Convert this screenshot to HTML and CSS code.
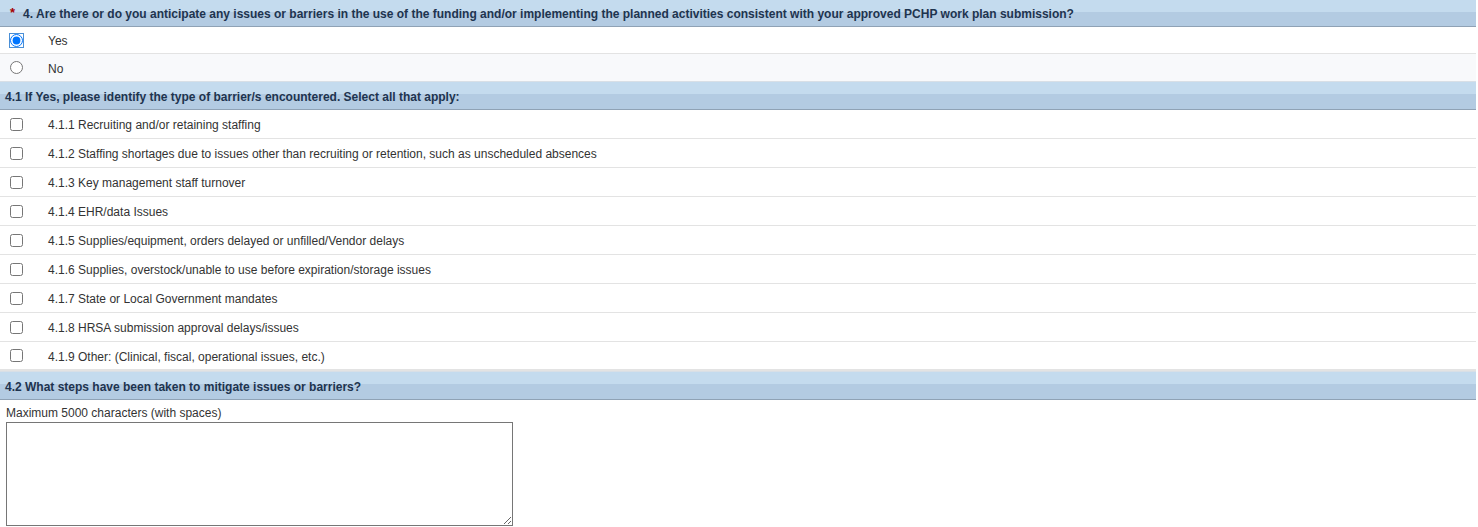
FILE: index.html
```html
<!DOCTYPE html>
<html lang="en">
<head>
  <meta charset="UTF-8">
  <title>Barriers</title>
  <link rel="stylesheet" href="styles.css">
</head>
<body>
  <div class="form">
    <div class="section-head">
      <span class="req">*</span>
      <span>4. Are there or do you anticipate any issues or barriers in the use of the funding and/or implementing the planned activities consistent with your approved PCHP work plan submission?</span>
    </div>
    <label class="opt-row">
      <input type="radio" name="q4" checked>
      <span>Yes</span>
    </label>
    <label class="opt-row alt">
      <input type="radio" name="q4">
      <span>No</span>
    </label>

    <div class="section-head sub">4.1 If Yes, please identify the type of barrier/s encountered. Select all that apply:</div>
    <label class="check-row"><input type="checkbox"><span>4.1.1 Recruiting and/or retaining staffing</span></label>
    <label class="check-row"><input type="checkbox"><span>4.1.2 Staffing shortages due to issues other than recruiting or retention, such as unscheduled absences</span></label>
    <label class="check-row"><input type="checkbox"><span>4.1.3 Key management staff turnover</span></label>
    <label class="check-row"><input type="checkbox"><span>4.1.4 EHR/data Issues</span></label>
    <label class="check-row"><input type="checkbox"><span>4.1.5 Supplies/equipment, orders delayed or unfilled/Vendor delays</span></label>
    <label class="check-row"><input type="checkbox"><span>4.1.6 Supplies, overstock/unable to use before expiration/storage issues</span></label>
    <label class="check-row"><input type="checkbox"><span>4.1.7 State or Local Government mandates</span></label>
    <label class="check-row"><input type="checkbox"><span>4.1.8 HRSA submission approval delays/issues</span></label>
    <label class="check-row"><input type="checkbox"><span>4.1.9 Other: (Clinical, fiscal, operational issues, etc.)</span></label>

    <div class="section-head sub">4.2 What steps have been taken to mitigate issues or barriers?</div>
    <div class="text-block">
      <div class="hint">Maximum 5000 characters (with spaces)</div>
      <textarea class="answer"></textarea>
    </div>
  </div>
</body>
</html>
```

FILE: styles.css
```css
body {
  margin: 0;
  font-family: "Liberation Sans", Arial, sans-serif;
  font-size: 12px;
  color: #333;
  background: #fff;
}

.form {
  width: 1476px;
}

.section-head {
  display: flex;
  align-items: center;
  gap: 8px;
  box-sizing: border-box;
  height: 27px;
  padding: 2px 5px 0 10px;
  background: linear-gradient(#c4dbee 0, #c4dbee 46%, #b3cbe2 46%, #b3cbe2 100%);
  border-bottom: 1px solid #8fa2b5;
  font-weight: bold;
  color: #1e344f;
}

.section-head.sub {
  padding-left: 5px;
  height: 29px;
  border-top: 1px solid #d8dfe6;
}

.req {
  color: #a40000;
  font-size: 13px;
  line-height: 1;
  margin-top: -4px;
}

.opt-row,
.check-row {
  display: flex;
  align-items: center;
  box-sizing: border-box;
  height: 27px;
  padding-top: 2px;
  border-bottom: 1px solid #e3e3e3;
}

.check-row {
  height: 29px;
}

.check-row:last-of-type {
  border-bottom: 2px solid #e3e3e3;
}

.opt-row.alt {
  background: #f8f9fb;
  border-bottom: none;
}

.opt-row input,
.check-row input {
  width: 13px;
  height: 13px;
  margin: -2px 25px 0 10px;
}

.opt-row input:checked {
  outline: 1px solid #4a8fd6;
  outline-offset: 0;
  border-radius: 2px;
}

.text-block {
  padding: 6px 6px 0;
}

.hint {
  line-height: 14px;
  margin-bottom: 2px;
}

.answer {
  display: block;
  box-sizing: border-box;
  width: 507px;
  height: 104px;
  margin: 0;
  border: 1px solid #767676;
  resize: both;
}
```
